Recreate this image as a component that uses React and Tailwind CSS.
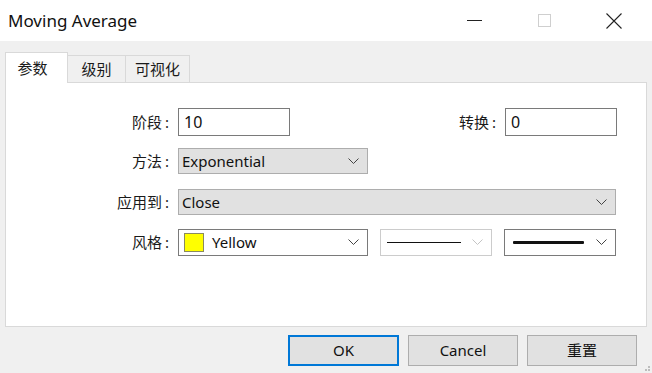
import React from 'react';

const FONT = { fontFamily: '"Noto Sans", "Noto Sans CJK SC", sans-serif' };

const Chevron = ({ light }) => (
  <svg width="11" height="7" viewBox="0 0 11 7" className="shrink-0">
    <polyline points="0.5,0.5 5.5,5.5 10.5,0.5" fill="none" stroke={light ? '#c4c4c4' : '#444'} strokeWidth="1" />
  </svg>
);

// label with the colon set apart, like the native dialog
const Label = ({ children }) => (
  <span className="text-[15px] text-[#1a1a1a] whitespace-nowrap flex items-center">
    <span>{children}</span>
    <span className="ml-[3px]">:</span>
  </span>
);

const App = () => {
  return (
    <div className="w-[652px] h-[373px] bg-[#f0f0f0] flex flex-col overflow-hidden" style={FONT}>
      {/* Title bar */}
      <div className="h-[41px] bg-white flex items-center shrink-0">
        <span className="ml-2 text-[17px] text-[#111] flex-1">Moving Average</span>
        <div className="flex items-center h-full">
          <div className="w-[70px] h-full flex items-center justify-center">
            <div className="w-[15px] h-px bg-[#222]"></div>
          </div>
          <div className="w-[70px] h-full flex items-center justify-center">
            <div className="w-[13px] h-[13px] border border-[#cfcfcf]"></div>
          </div>
          <div className="w-[70px] h-full flex items-center justify-center mr-[3px]">
            <svg width="16" height="16" viewBox="0 0 16 16">
              <path d="M0.5 0.5 L15.5 15.5 M15.5 0.5 L0.5 15.5" stroke="#222" strokeWidth="1.1" />
            </svg>
          </div>
        </div>
      </div>

      {/* Tabs */}
      <div className="flex items-end h-[41px] pl-[5px] shrink-0">
        <div className="w-[63px] h-[31px] bg-white border border-b-0 border-[#d9d9d9] flex items-center justify-center pr-[8px] text-[15px] text-[#1a1a1a] relative z-10 -mb-px">
          参数
        </div>
        <div className="w-[58px] h-[27px] border border-l-0 border-b-0 border-[#d9d9d9] flex items-center justify-center text-[15px] text-[#1a1a1a]">
          级别
        </div>
        <div className="w-[64px] h-[27px] border border-l-0 border-b-0 border-[#d9d9d9] flex items-center justify-center text-[15px] text-[#1a1a1a]">
          可视化
        </div>
      </div>

      {/* Panel */}
      <div className="mx-[5px] h-[245px] bg-white border border-[#d9d9d9] shrink-0">
        <div className="pl-[172px] pr-[29px]">
          {/* Row 1 */}
          <div className="flex items-center mt-[25px] h-[28px]">
            <div className="w-0 flex justify-end">
              <div className="pr-[9px]"><Label>阶段</Label></div>
            </div>
            <div className="w-[112px] h-[28px] border border-[#7a7a7a] bg-white flex items-center px-[5px] text-[16px] text-[#111]">
              10
            </div>
            <div className="flex-1"></div>
            <div className="pr-[9px]"><Label>转换</Label></div>
            <div className="w-[112px] h-[28px] border border-[#7a7a7a] bg-white flex items-center px-[5px] text-[16px] text-[#111]">
              0
            </div>
          </div>

          {/* Row 2 */}
          <div className="flex items-center mt-[12px] h-[26px]">
            <div className="w-0 flex justify-end">
              <div className="pr-[9px]"><Label>方法</Label></div>
            </div>
            <div className="w-[190px] h-[26px] border border-[#adadad] bg-[#e1e1e1] flex items-center pl-[3px] pr-[8px] text-[15px] text-[#111]">
              <span className="flex-1">Exponential</span>
              <Chevron />
            </div>
          </div>

          {/* Row 3 */}
          <div className="flex items-center mt-[15px] h-[26px]">
            <div className="w-0 flex justify-end">
              <div className="pr-[9px]"><Label>应用到</Label></div>
            </div>
            <div className="w-[438px] h-[26px] border border-[#adadad] bg-[#e1e1e1] flex items-center pl-[3px] pr-[8px] text-[15px] text-[#111]">
              <span className="flex-1">Close</span>
              <Chevron />
            </div>
          </div>

          {/* Row 4 */}
          <div className="flex items-center mt-[14px] h-[27px] gap-[12px]">
            <div className="w-0 flex justify-end -mr-[12px]">
              <div className="pr-[9px]"><Label>风格</Label></div>
            </div>
            <div className="w-[190px] h-[27px] border border-[#7a7a7a] bg-white flex items-center pl-[5px] pr-[8px] text-[15px] text-[#111]">
              <div className="w-[20px] h-[19px] bg-[#ffff00] border border-[#8a8a60]"></div>
              <span className="flex-1 ml-[8px]">Yellow</span>
              <Chevron />
            </div>
            <div className="w-[112px] h-[27px] border border-[#cccccc] bg-white flex items-center pl-[6px] pr-[8px]">
              <div className="w-[74px] h-px bg-[#111]"></div>
              <div className="flex-1"></div>
              <Chevron light />
            </div>
            <div className="w-[112px] h-[27px] border border-[#7a7a7a] bg-white flex items-center pl-[8px] pr-[8px]">
              <div className="w-[71px] h-[3px] bg-[#111] rounded-[1px]"></div>
              <div className="flex-1"></div>
              <Chevron />
            </div>
          </div>
        </div>
      </div>

      {/* Buttons */}
      <div className="flex justify-end items-start pt-[8px] pr-[15px] gap-[9px] relative flex-1">
        <button className="w-[111px] h-[31px] border-2 border-[#0078d7] bg-[#e1e1e1] text-[15px] text-[#111]">
          OK
        </button>
        <button className="w-[110px] h-[31px] border border-[#adadad] bg-[#e1e1e1] text-[15px] text-[#111]">
          Cancel
        </button>
        <button className="w-[110px] h-[31px] border border-[#adadad] bg-[#e1e1e1] text-[15px] text-[#111]">
          重置
        </button>
        <div className="absolute right-[2px] bottom-[2px] grid grid-cols-2 gap-px">
          <span></span>
          <span className="w-[2px] h-[2px] bg-[#bdbdbd]"></span>
          <span className="w-[2px] h-[2px] bg-[#bdbdbd]"></span>
          <span className="w-[2px] h-[2px] bg-[#bdbdbd]"></span>
        </div>
      </div>
    </div>
  );
};

export default App;
